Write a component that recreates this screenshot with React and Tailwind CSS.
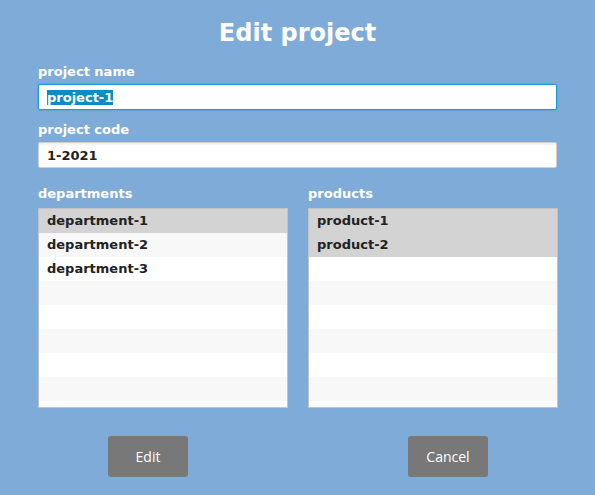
import { useEffect, useRef } from 'react'

const departments = ['department-1', 'department-2', 'department-3']
const products = ['product-1', 'product-2']

function ListBox({ items, selected }) {
  const rows = Array.from({ length: 9 }, (_, i) => items[i] || '')
  return (
    <div className="h-[200px] overflow-hidden border border-[#c3c3c3] bg-white">
      {rows.map((item, i) => (
        <div
          key={i}
          className={
            'h-6 px-2 text-[13px] font-bold leading-6 text-[#222] ' +
            (selected.includes(i) ? 'bg-[#d3d3d3]' : i % 2 === 1 ? 'bg-[#f8f8f8]' : 'bg-white')
          }
        >
          {item}
        </div>
      ))}
    </div>
  )
}

export default function App() {
  const nameRef = useRef(null)

  useEffect(() => {
    nameRef.current?.focus()
    nameRef.current?.select()
  }, [])

  return (
    <div
      className="h-[495px] w-[595px] bg-[#7eabd8] px-[38px] pt-[18px]"
      style={{ fontFamily: '"DejaVu Sans", sans-serif' }}
    >
      <h1 className="text-center text-[24px] font-bold leading-[30px] text-white">Edit project</h1>

      <div className="mt-[16px] text-[13px] font-bold leading-4 text-white">project name</div>
      <input
        ref={nameRef}
        defaultValue="project-1"
        className="mt-[4px] block h-[26px] w-[519px] rounded-[2px] border border-[#1a9ad6] bg-white px-2 text-[13px] font-bold text-[#222] shadow-[0_0_2px_#1a9ad6] outline-none selection:bg-[#0a8cc4] selection:text-white"
      />

      <div className="mt-[12px] text-[13px] font-bold leading-4 text-white">project code</div>
      <input
        defaultValue="1-2021"
        className="mt-[4px] block h-[26px] w-[519px] rounded-[2px] border border-[#cfcfcf] bg-white px-2 text-[13px] font-bold text-[#222] shadow-[inset_0_2px_2px_rgba(0,0,0,0.06)] outline-none"
      />

      <div className="mt-[18px] grid grid-cols-[250px_250px] gap-x-[20px]">
        <div>
          <div className="text-[13px] font-bold leading-4 text-white">departments</div>
          <div className="mt-[6px]">
            <ListBox items={departments} selected={[0]} />
          </div>
        </div>
        <div>
          <div className="text-[13px] font-bold leading-4 text-white">products</div>
          <div className="mt-[6px]">
            <ListBox items={products} selected={[0, 1]} />
          </div>
        </div>
      </div>

      <div
        className="mt-[28px] flex justify-between pl-[70px] pr-[69px]"
        style={{ fontFamily: '"Open Sans", sans-serif' }}
      >
        <button className="h-[41px] w-[80px] rounded-[3px] bg-[#787878] text-[14px] text-white">Edit</button>
        <button className="h-[41px] w-[80px] rounded-[3px] bg-[#787878] text-[14px] text-white">Cancel</button>
      </div>
    </div>
  )
}
